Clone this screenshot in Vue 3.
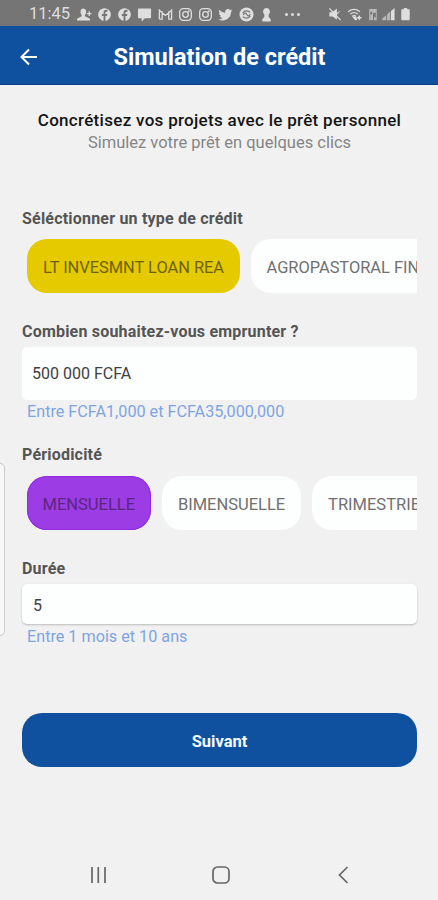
<script setup>
import { ref } from 'vue'

const loans = ['LT INVESMNT LOAN REA', 'AGROPASTORAL FINANCE']
const periods = ['MENSUELLE', 'BIMENSUELLE', 'TRIMESTRIELLE']
const loan = ref(0)
const period = ref(0)
const amount = ref('500 000 FCFA')
const duration = ref('5')
</script>

<template>
  <div class="screen">
    <div class="status">
      <span class="time">11:45</span>
      <div class="notifs">
        <svg viewBox="0 0 16 16"><path d="M6.700 1.500c2 0 3.100 1.400 3.100 3.400 0 1.700-.6 3-1.400 3.800v1.100l4.600 2.100c.7.400 1 1 1 2.600H0c0-1.600.2-2.200 1-2.600l4-2V8.700C4.200 7.900 3.700 6.600 3.700 4.900c0-2 1-3.400 3-3.400z" /><path d="M10.500 7h5M13 4.500v5" class="line" /></svg>
        <svg v-for="n in 2" :key="'f' + n" viewBox="0 0 16 16"><circle cx="8" cy="8" r="6.800" /><path class="cut" d="M7 15V9.600H5.200V7.400H7V6.100C7 4 8 3 10 3h1.200v2H10c-.7 0-1 .4-1 1.100v1.300h2.100l-.4 2.200H9V15z" /></svg>
        <svg viewBox="0 0 16 16"><path d="M2 1.500h12q1 0 1 1v8.500q0 1-1 1H8.500L5 15.500V12H2q-1 0-1-1V2.500q0-1 1-1z" /></svg>
        <svg viewBox="0 0 16 16"><path class="line" d="M1.500 13V3.500L8 9l6.500-5.500V13h-3V4.500M1.500 13h3V4.500" /></svg>
        <svg v-for="n in 2" :key="'i' + n" viewBox="0 0 16 16"><rect class="line" x="1.800" y="1.800" width="12.400" height="12.400" rx="3.700" /><circle class="line" cx="8" cy="8" r="3" /><circle cx="11.500" cy="4.500" r="1" /></svg>
        <svg viewBox="0 0 24 24"><path d="M23 5.500c-.8.400-1.700.6-2.600.7.900-.6 1.600-1.500 2-2.500-.9.500-1.900.9-2.900 1.100A4.600 4.600 0 0 0 11.600 9C7.800 8.800 4.400 7 2.200 4.200c-1.200 2-.6 4.700 1.400 6.100-.7 0-1.500-.2-2.100-.6 0 2.200 1.500 4.200 3.700 4.600-.7.200-1.400.2-2.100.1.600 1.800 2.300 3.200 4.300 3.200A9.300 9.300 0 0 1 .6 19.500C9.500 25.200 21 19 20.800 7.900c.9-.7 1.600-1.500 2.200-2.400z" /></svg>
        <svg viewBox="0 0 16 16"><circle cx="8" cy="8" r="7.500" /><path class="swirl" d="M4 6.500C6 3.500 9.500 4 12 5.500M12 9.500c-2 3-5.500 2.500-8 1M4.500 8.500C6 6 7.500 6 8.500 8s2 2 3.500-.5" /></svg>
        <svg viewBox="0 0 16 16"><path d="M8 1a4 4 0 0 1 3 6.300L10.300 8v2.500L12.500 13v2.500h-9V13l2.200-2.500V8L5 7.300A4 4 0 0 1 8 1z" /></svg>
      </div>
      <div class="more"><i /><i /><i /></div>
      <div class="system">
        <svg width="14" height="16" viewBox="0 0 14 16"><path d="M1 5.500h3l5-4v5l4-3-4 5v5L4.500 10H1z" /><path class="line" d="M1 1.500 13 14" /></svg>
        <svg width="16" height="16" viewBox="0 0 16 16"><path class="line" d="M.7 5Q7 .2 13.300 5M3 7.500q4-3 8 0M5 10q2-1.500 4 0" /><path d="m5 10 4 0 1.500 3.500L8 14zM12.500 8.500l1 2 2 1-2 1-1 2-1-2-2-1 2-1z" /></svg>
        <svg width="8" height="16" viewBox="0 0 8 16" class="dim"><path d="M0 2h8v12H5v-3h2V6H4v3H3V5H1v9H0z" /><path d="M1 8h3v6H1z" /></svg>
        <svg width="13" height="16" viewBox="0 0 13 16"><path class="dim" d="M0 14v-2l4-3v5zM5 14V8l3-3v9z" /><path d="M9 14V4.500L13 1v13z" /></svg>
        <svg width="9" height="16" viewBox="0 0 9 16"><path d="M2.800 1h3.400v1.500H8q1 0 1 1V13q0 1-1 1H1q-1 0-1-1V3.500q0-1 1-1h1.800z" /></svg>
      </div>
    </div>

    <header class="header">
      <svg class="back" viewBox="0 0 18 18"><path d="M17 9H2M9 1.500 1.500 9 9 16.500" /></svg>
      <h1>Simulation de crédit</h1>
    </header>

    <main class="content">
      <div class="intro">
        <h2>Concrétisez vos projets avec le prêt personnel</h2>
        <p>Simulez votre prêt en quelques clics</p>
      </div>

      <section class="loan">
        <label>Séléctionner un type de crédit</label>
        <div class="chips">
          <button v-for="(name, i) in loans" :key="name" class="chip" :class="{ gold: loan === i }" @click="loan = i">{{ name }}</button>
        </div>
      </section>

      <section class="amount">
        <label>Combien souhaitez-vous emprunter ?</label>
        <input v-model="amount" class="field tall">
        <p class="hint">Entre FCFA1,000 et FCFA35,000,000</p>
      </section>

      <section class="periodicity">
        <label>Périodicité</label>
        <div class="chips">
          <button v-for="(name, i) in periods" :key="name" class="chip" :class="{ violet: period === i }" @click="period = i">{{ name }}</button>
        </div>
      </section>

      <section class="duration">
        <label>Durée</label>
        <input v-model="duration" class="field short">
        <p class="hint">Entre 1 mois et 10 ans</p>
      </section>

      <button class="next">Suivant</button>
    </main>

    <nav class="nav">
      <svg viewBox="0 0 20 20"><path d="M3 2v16M9.300 2v16M16 2v16" /></svg>
      <svg viewBox="0 0 20 20"><rect x="2" y="2" width="16" height="16" rx="4.500" /></svg>
      <svg viewBox="0 0 20 20"><path d="m14.500 2-8 8 8 8" /></svg>
    </nav>
    <div class="edge" />
  </div>
</template>

<style>
body { margin: 0; }
</style>

<style scoped>
* { box-sizing: border-box; }
.screen {
  position: relative;
  display: flex;
  flex-direction: column;
  width: 438px;
  height: 900px;
  overflow: hidden;
  background: #f1f1f1;
  font-family: Roboto, "Liberation Sans", sans-serif;
}
h1, h2, p { margin: 0; }
button { border: 0; font-family: inherit; white-space: nowrap; }
svg { display: block; flex: none; }
.status {
  display: flex;
  align-items: center;
  height: 26px;
  padding: 2px 0 0 29px;
  background: #757575;
  color: #dedede;
}
.status svg { fill: #dedede; }
.status .line { fill: none; stroke: #dedede; stroke-width: 1.4; }
.status .cut { fill: #757575; }
.status .swirl { fill: none; stroke: #757575; stroke-width: 1.2; }
.status .dim { opacity: .65; }
.time { width: 47.5px; font-size: 16.5px; line-height: 20px; }
.notifs { display: flex; gap: 5.25px; }
.notifs svg { width: 15px; height: 15px; }
.more { display: flex; gap: 3.2px; margin-left: 11px; }
.more i { width: 3px; height: 3px; border-radius: 50%; background: #dedede; }
.system { display: flex; align-items: center; gap: 5.6px; margin-left: 27.500px; }
.system svg { height: 15px; }
.header {
  display: flex;
  align-items: center;
  height: 59px;
  padding: 3px 0 0 20px;
  background: #10519f;
  border-bottom: 1px solid #0b3c87;
}
.back { width: 18px; height: 18px; fill: none; stroke: #fff; stroke-width: 2; }
h1 {
  flex: 1;
  padding-right: 37px;
  color: #fff;
  font-size: 23.5px;
  font-weight: 700;
  line-height: 30px;
  text-align: center;
}
.content { display: flex; flex-direction: column; flex: 1; padding: 23px 21px 0 22px; }
.intro { text-align: center; }
h2 { color: #151515; font-size: 17px; font-weight: 500; line-height: 24px; letter-spacing: .3px; }
.intro p { color: #858585; font-size: 16.5px; line-height: 22px; }
section { display: flex; flex-direction: column; }
label {
  padding-top: 1px;
  color: #555;
  font-size: 16px;
  font-weight: 700;
  line-height: 20px;
  letter-spacing: .2px;
}
.loan { margin-top: 54px; }
.chips { display: flex; gap: 10.5px; padding-left: 5px; overflow: hidden; }
.loan .chips { margin-top: 10px; }
.chip {
  flex: none;
  height: 54px;
  padding: 2px 16px 0;
  border-radius: 20px;
  background: #fdfefe;
  color: #707070;
  font-size: 16.4px;
}
.chip.gold { background: #e5ca00; color: #6e620c; }
.chip.violet { background: #9b3ce5; box-shadow: inset 0 0 0 1px #9229df; color: #5b267f; }
.amount { margin-top: 28px; }
.field {
  width: 100%;
  border: 0;
  border-radius: 5px;
  outline: 0;
  background: #fdfefe;
  color: #404040;
  font-family: inherit;
  font-size: 16px;
}
.tall { height: 53px; margin-top: 5px; padding: 0 10px; }
.hint { padding: 1px 0 0 5px; color: #7fa4e3; font-size: 16.2px; line-height: 22px; }
.periodicity { margin-top: 21px; }
.periodicity .chips { gap: 10.800px; margin-top: 11px; padding-left: 4.5px; }
.periodicity .chip { font-size: 16.5px; }
.duration { margin-top: 28px; }
.short { height: 40px; margin-top: 5px; padding: 2px 11px 0; box-shadow: 0 1px 2px #bbb; }
.duration .hint { margin-top: 1px; }
.next {
  height: 54px;
  margin-top: 65px;
  padding: 2px 0 0;
  border-radius: 20px;
  background: #10519f;
  color: #f4f8ff;
  font-size: 16.5px;
  font-weight: 700;
}
.nav { display: flex; justify-content: space-between; height: 35px; padding: 0 85px 0 89px; }
.nav svg { width: 20px; height: 20px; fill: none; stroke: #666; stroke-width: 1.7; }
.edge {
  position: absolute;
  top: 463px;
  left: -5px;
  width: 10px;
  height: 173px;
  border: 1px solid #ccc;
  border-radius: 5px;
  background: #f7f7f7;
}
</style>
